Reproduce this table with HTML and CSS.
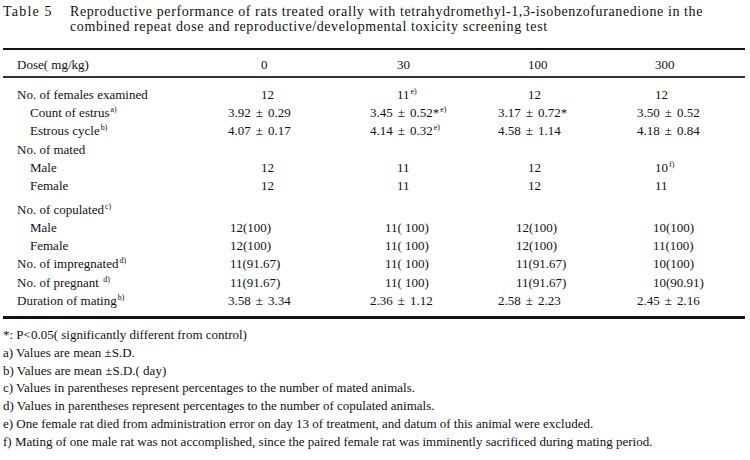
FILE: index.html
```html
<!DOCTYPE html>
<html>
<head>
<meta charset="utf-8">
<link rel="stylesheet" href="styles.css">
</head>
<body>
<div class="page">
  <div class="caption">
    <div class="tno">Table 5</div>
    <div class="ttl">Reproductive performance of rats treated orally with tetrahydromethyl-1,3-isobenzofuranedione in the<br>combined repeat dose and reproductive/developmental toxicity screening test</div>
  </div>
  <div class="table">
    <div class="row head">
      <div class="lab">Dose( mg/kg)</div>
      <div class="c i">0</div><div class="c i">30</div><div class="c i">100</div><div class="c i">300</div>
    </div>
    <div class="body">
      <div class="row">
        <div class="lab">No. of females examined</div>
        <div class="c i">12</div><div class="c i">11<sup>e)</sup></div><div class="c i">12</div><div class="c i">12</div>
      </div>
      <div class="row">
        <div class="lab sub">Count of estrus<sup>a)</sup></div>
        <div class="c s">3.92<span class="pm">±</span>0.29</div><div class="c s">3.45<span class="pm">±</span>0.52*<sup>e)</sup></div><div class="c s">3.17<span class="pm">±</span>0.72*</div><div class="c s">3.50<span class="pm">±</span>0.52</div>
      </div>
      <div class="row">
        <div class="lab sub">Estrous cycle<sup>b)</sup></div>
        <div class="c s">4.07<span class="pm">±</span>0.17</div><div class="c s">4.14<span class="pm">±</span>0.32<sup>e)</sup></div><div class="c s">4.58<span class="pm">±</span>1.14</div><div class="c s">4.18<span class="pm">±</span>0.84</div>
      </div>
      <div class="row">
        <div class="lab">No. of mated</div>
        <div class="c"></div><div class="c"></div><div class="c"></div><div class="c"></div>
      </div>
      <div class="row">
        <div class="lab sub">Male</div>
        <div class="c i">12</div><div class="c i">11</div><div class="c i">12</div><div class="c i">10<sup>f)</sup></div>
      </div>
      <div class="row">
        <div class="lab sub">Female</div>
        <div class="c i">12</div><div class="c i">11</div><div class="c i">12</div><div class="c i">11</div>
      </div>
      <div class="row gap">
        <div class="lab">No. of copulated<sup>c)</sup></div>
        <div class="c"></div><div class="c"></div><div class="c"></div><div class="c"></div>
      </div>
      <div class="row">
        <div class="lab sub">Male</div>
        <div class="c p">12(100)</div><div class="c p">11( 100)</div><div class="c p">12(100)</div><div class="c p">10(100)</div>
      </div>
      <div class="row">
        <div class="lab sub">Female</div>
        <div class="c p">12(100)</div><div class="c p">11( 100)</div><div class="c p">12(100)</div><div class="c p">11(100)</div>
      </div>
      <div class="row">
        <div class="lab">No. of impregnated<sup>d)</sup></div>
        <div class="c p">11(91.67)</div><div class="c p">11( 100)</div><div class="c p">11(91.67)</div><div class="c p">10(100)</div>
      </div>
      <div class="row">
        <div class="lab">No. of pregnant <sup>d)</sup></div>
        <div class="c p">11(91.67)</div><div class="c p">11( 100)</div><div class="c p">11(91.67)</div><div class="c p">10(90.91)</div>
      </div>
      <div class="row">
        <div class="lab">Duration of mating<sup>b)</sup></div>
        <div class="c s">3.58<span class="pm">±</span>3.34</div><div class="c s">2.36<span class="pm">±</span>1.12</div><div class="c s">2.58<span class="pm">±</span>2.23</div><div class="c s">2.45<span class="pm">±</span>2.16</div>
      </div>
    </div>
  </div>
  <div class="notes">
    <div>*: P&lt;0.05( significantly different from control)</div>
    <div>a) Values are mean ±S.D.</div>
    <div>b) Values are mean ±S.D.( day)</div>
    <div>c) Values in parentheses represent percentages to the number of mated animals.</div>
    <div>d) Values in parentheses represent percentages to the number of copulated animals.</div>
    <div>e) One female rat died from administration error on day 13 of treatment, and datum of this animal were excluded.</div>
    <div>f) Mating of one male rat was not accomplished, since the paired female rat was imminently sacrificed during mating period.</div>
  </div>
</div>
</body>
</html>
```

FILE: styles.css
```css
html, body {
  margin: 0;
  padding: 0;
  background: #fff;
}
body {
  font-family: "Liberation Serif", "DejaVu Serif", serif;
  font-size: 13px;
  color: #111;
}
.page {
  padding: 4px 5px 0 3px;
}
.caption {
  display: flex;
  font-size: 14px;
  line-height: 15px;
  letter-spacing: 0.6px;
  white-space: nowrap;
}
.tno {
  width: 67px;
  flex: none;
  letter-spacing: 1.2px;
}
.table {
  margin-top: 14px;
  border-top: 2px solid #111;
  border-bottom: 3px solid #111;
}
.row {
  display: grid;
  grid-template-columns: 217px 145px 130px 130px 120px;
  height: 18.2px;
  line-height: 18px;
  white-space: nowrap;
}
.row.head {
  height: 28px;
  padding-top: 6px;
  box-sizing: border-box;
  border-bottom: 2px solid #333;
}
.body {
  padding: 8px 0 6px;
}
.row.gap {
  margin-top: 5.8px;
}
.lab {
  padding-left: 14px;
}
.lab.sub {
  padding-left: 27px;
}
.pm {
  padding: 0 5px;
}
sup {
  font-size: 8px;
  line-height: 0;
  vertical-align: 5px;
  margin-left: 1px;
}
/* column offsets */
.row .c:nth-child(2).i { padding-left: 41px; }
.row .c:nth-child(3).i { padding-left: 32px; }
.row .c:nth-child(4).i { padding-left: 33px; }
.row .c:nth-child(5).i { padding-left: 30px; }
.row .c:nth-child(2).s { padding-left: 8px; }
.row .c:nth-child(3).s { padding-left: 5px; }
.row .c:nth-child(4).s { padding-left: 3px; }
.row .c:nth-child(5).s { padding-left: 12px; }
.row .c:nth-child(2).p { padding-left: 10px; }
.row .c:nth-child(3).p { padding-left: 20px; }
.row .c:nth-child(4).p { padding-left: 21px; }
.row .c:nth-child(5).p { padding-left: 28px; }
.notes {
  padding-top: 7px;
  line-height: 17.8px;
  white-space: nowrap;
}
```
